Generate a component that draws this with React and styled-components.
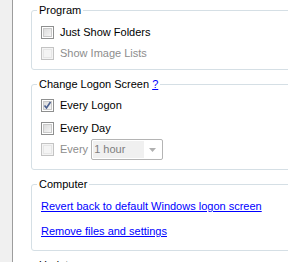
import React from "react";
import styled, { createGlobalStyle } from "styled-components";

const Global = createGlobalStyle`
  html, body { margin: 0; padding: 0; background: #ffffff; }
  body { font-family: "Liberation Sans", Arial, sans-serif; font-size: 11px; line-height: 13px; color: #000; }
`;

const Page = styled.div`
  display: flex;
  width: 288px;
  height: 262px;
  overflow: hidden;
  background: #ffffff;
`;

const Sidebar = styled.div`
  flex: 0 0 12px;
  background: #f0f0f0;
  border-right: 1px solid #9d9d9d;
`;

const Content = styled.div`
  display: flex;
  flex-direction: column;
  gap: 8px;
  padding: 4px 0 0 18px;
  flex: 0 0 auto;
`;

const Group = styled.fieldset`
  margin: 0;
  min-width: 0;
  width: 290px;
  box-sizing: border-box;
  border: 1px solid #d5dfe5;
  border-radius: 3px;
  padding: ${(p) => p.$pt}px 0 ${(p) => p.$pb}px 9px;
  display: flex;
  flex-direction: column;
  gap: ${(p) => p.$gap || 0}px;
`;

const Legend = styled.legend`
  padding: 0 2px;
  margin-left: -4px;
  line-height: 13px;
  color: #000;
`;

const HelpLink = styled.a`
  color: #0000ff;
  text-decoration: underline;
  cursor: pointer;
`;

const Row = styled.div`
  display: flex;
  align-items: center;
  height: ${(p) => p.$h}px;
`;

const Box = styled.span`
  box-sizing: border-box;
  width: 13px;
  height: 13px;
  flex: 0 0 13px;
  border: 1px solid ${(p) => (p.$disabled ? "#c3c3c3" : "#8e8f8f")};
  background: ${(p) => (p.$disabled ? "#f4f4f4" : "#ffffff")};
  padding: 1px;
  display: flex;
`;

const BoxInner = styled.span`
  flex: 1;
  border: 1px solid ${(p) => (p.$disabled ? "#e6e6e6" : "#c9c9c9")};
  background: ${(p) =>
    p.$disabled
      ? "#f4f4f4"
      : "linear-gradient(135deg, #dcdcdc 0%, #eaeaea 60%, #f6f6f6 100%)"};
  position: relative;
`;

const Check = styled.svg`
  position: absolute;
  left: -2px;
  top: -2px;
  width: 11px;
  height: 11px;
`;

const Label = styled.span`
  margin-left: 6px;
  color: ${(p) => (p.$disabled ? "#8d8d8d" : "#000")};
  white-space: nowrap;
`;

const Select = styled.div`
  box-sizing: border-box;
  margin-left: 3px;
  width: 72px;
  height: 21px;
  border: 1px solid #b4b4b4;
  border-radius: 2px;
  background: #ffffff;
  padding: 1px;
  display: flex;
`;

const SelectValue = styled.span`
  flex: 0 0 50px;
  background: #f0f0f0;
  color: #7e7e7e;
  padding-left: 1px;
  line-height: 17px;
`;

const SelectArrow = styled.span`
  flex: 1;
  display: flex;
  align-items: center;
  justify-content: center;
`;

const Link = styled.a`
  color: #0000ff;
  text-decoration: underline;
  line-height: 13px;
  white-space: nowrap;
  cursor: pointer;
`;

function Checkbox({ checked, disabled, label }) {
  return (
    <>
      <Box $disabled={disabled}>
        <BoxInner $disabled={disabled}>
          {checked && (
            <Check viewBox="0 0 11 11">
              <path
                d="M2.5 5.5 L4.5 8 L8.5 2"
                fill="none"
                stroke="#4a5f8f"
                strokeWidth="1.6"
              />
            </Check>
          )}
        </BoxInner>
      </Box>
      <Label $disabled={disabled}>{label}</Label>
    </>
  );
}

export default function App() {
  return (
    <>
      <Global />
      <Page>
        <Sidebar />
        <Content>
          <Group $pt={5} $pb={5}>
            <Legend>Program</Legend>
            <Row $h={21}>
              <Checkbox label="Just Show Folders" />
            </Row>
            <Row $h={21}>
              <Checkbox disabled label="Show Image Lists" />
            </Row>
          </Group>
          <Group $pt={3} $pb={9}>
            <Legend>
              Change Logon Screen <HelpLink>?</HelpLink>
            </Legend>
            <Row $h={23}>
              <Checkbox checked label="Every Logon" />
            </Row>
            <Row $h={22}>
              <Checkbox label="Every Day" />
            </Row>
            <Row $h={21}>
              <Checkbox disabled label="Every" />
              <Select>
                <SelectValue>1 hour</SelectValue>
                <SelectArrow>
                  <svg width="7" height="4" viewBox="0 0 7 4">
                    <path d="M0 0 H7 L3.5 4 Z" fill="#b0b0b0" />
                  </svg>
                </SelectArrow>
              </Select>
            </Row>
          </Group>
          <Group $pt={9} $pb={12} $gap={12}>
            <Legend>Computer</Legend>
            <Link>Revert back to default Windows logon screen</Link>
            <Link>Remove files and settings</Link>
          </Group>
          <Group $pt={9} $pb={12}>
            <Legend>Updates</Legend>
          </Group>
        </Content>
      </Page>
    </>
  );
}
